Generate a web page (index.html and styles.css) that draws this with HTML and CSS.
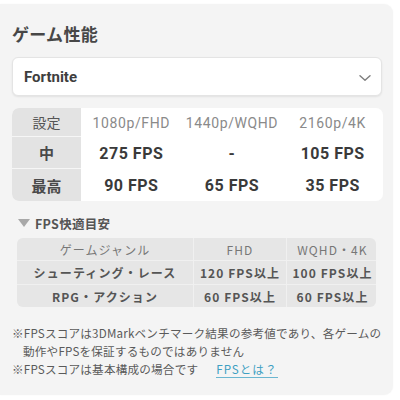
FILE: index.html
```html
<!DOCTYPE html>
<html lang="ja">
<head>
<meta charset="utf-8">
<link rel="stylesheet" href="styles.css">
</head>
<body>
<div class="card">
  <h2 class="title">ゲーム性能</h2>
  <div class="select">
    <span class="select-label">Fortnite</span>
    <svg class="chev" width="14" height="8" viewBox="0 0 14 8"><path d="M2 1.8 L7 6.2 L12 1.8" fill="none" stroke="#808080" stroke-width="1.5" stroke-linecap="round" stroke-linejoin="round"/></svg>
  </div>
  <div class="perf">
    <div class="perf-head key">設定</div>
    <div class="perf-head">1080p/FHD</div>
    <div class="perf-head">1440p/WQHD</div>
    <div class="perf-head">2160p/4K</div>
    <div class="key strong">中</div>
    <div class="val">275 FPS</div>
    <div class="val">-</div>
    <div class="val">105 FPS</div>
    <div class="key strong last">最高</div>
    <div class="val">90 FPS</div>
    <div class="val">65 FPS</div>
    <div class="val">35 FPS</div>
  </div>
  <div class="sub">
    <span class="tri"></span>
    <span class="sub-title">FPS快適目安</span>
  </div>
  <div class="guide">
    <div class="g-head">ゲームジャンル</div>
    <div class="g-head">FHD</div>
    <div class="g-head">WQHD・4K</div>
    <div class="g-cell">シューティング・レース</div>
    <div class="g-cell">120 FPS以上</div>
    <div class="g-cell">100 FPS以上</div>
    <div class="g-cell">RPG・アクション</div>
    <div class="g-cell">60 FPS以上</div>
    <div class="g-cell">60 FPS以上</div>
  </div>
  <div class="notes">
    <p class="note">※FPSスコアは3DMarkベンチマーク結果の参考値であり、各ゲームの動作やFPSを保証するものではありません</p>
    <p class="note">※FPSスコアは基本構成の場合です<a class="link" href="#">FPSとは？</a></p>
  </div>
</div>
</body>
</html>
```
FILE: styles.css
```css
html, body {
  margin: 0;
  padding: 0;
  background: #ffffff;
}
body {
  font-family: "Noto Sans CJK JP", "Noto Sans", sans-serif;
  color: #444;
  width: 400px;
  height: 400px;
  overflow: hidden;
}
.card {
  margin-top: 4px;
  width: 393px;
  height: 391px;
  box-sizing: border-box;
  background: #f4f4f4;
  border-radius: 0 9px 9px 0;
  padding: 17px 0 0 12px;
  box-shadow: 0 0 2px rgba(0,0,0,0.04);
}
.title {
  margin: 0;
  font-size: 17px;
  line-height: 26px;
  font-weight: 700;
  color: #474747;
  letter-spacing: 0.3px;
}
.select {
  margin-top: 10px;
  width: 370px;
  height: 39px;
  box-sizing: border-box;
  background: #fff;
  border-radius: 6px;
  border: 1px solid #e4e4e4;
  box-shadow: 0 1px 2px rgba(0,0,0,0.08);
  display: flex;
  align-items: center;
  justify-content: space-between;
  padding: 0 9px 0 11px;
}
.select-label {
  font-family: "Roboto", "Noto Sans CJK JP", sans-serif;
  font-weight: 700;
  font-size: 15px;
  color: #3e3e3e;
}
.chev {
  margin-top: 2px;
}
.perf {
  margin-top: 12px;
  width: 371px;
  display: grid;
  grid-template-columns: 69px 1fr 1fr 1fr;
  grid-template-rows: 29px 32px 32px;
  background: #fff;
  border-radius: 7px;
  overflow: hidden;
}
.perf > div {
  display: flex;
  align-items: center;
  justify-content: center;
}
.key {
  background: #e3e3e3;
  color: #555;
  font-size: 14px;
  border-bottom: 1px solid #f6f6f6;
  box-sizing: border-box;
}
.key.last {
  border-bottom: none;
}
.strong {
  font-weight: 700;
  font-size: 15px;
  color: #4a4a4a;
}
.perf-head {
  font-family: "Roboto", "Noto Sans CJK JP", sans-serif;
  font-size: 14px;
  color: #8a8a8a;
  letter-spacing: 0.6px;
}
.perf-head.key {
  font-family: "Noto Sans CJK JP", sans-serif;
  color: #555;
  letter-spacing: 0;
}
.val {
  font-family: "Roboto", "Noto Sans CJK JP", sans-serif;
  font-weight: 700;
  font-size: 16px;
  color: #3a3a3a;
  letter-spacing: 0.5px;
}
.sub {
  margin-top: 14px;
  padding-left: 6px;
  display: flex;
  align-items: center;
  height: 16px;
}
.tri {
  width: 0;
  height: 0;
  border-left: 6px solid transparent;
  border-right: 6px solid transparent;
  border-top: 8px solid #a8a8a8;
  margin-right: 5px;
}
.sub-title {
  font-size: 12.5px;
  font-weight: 700;
  color: #555;
  letter-spacing: 0.3px;
}
.guide {
  margin-top: 7px;
  margin-left: 5px;
  width: 359px;
  display: grid;
  grid-template-columns: 176px 92px 91px;
  grid-template-rows: 22px 23px 22px;
  gap: 1px;
  background: #f0f0f0;
  border-radius: 6px;
  overflow: hidden;
}
.guide > div {
  background: #e6e6e6;
  display: flex;
  align-items: center;
  justify-content: center;
  font-size: 12px;
  letter-spacing: 1.1px;
}
.g-head {
  color: #777;
}
.g-cell {
  font-weight: 700;
  color: #555;
}
.notes {
  margin-top: 17px;
}
.note {
  margin: 0;
  font-size: 11.6px;
  line-height: 18px;
  color: #5a5a5a;
  padding-left: 11px;
  text-indent: -11px;
  width: 370px;
  letter-spacing: 0.2px;
}
.link {
  margin-left: 18px;
  color: #3e9fc2;
  text-decoration: none;
  border-bottom: 1px solid #6bb6d0;
  letter-spacing: 1px;
}
```
